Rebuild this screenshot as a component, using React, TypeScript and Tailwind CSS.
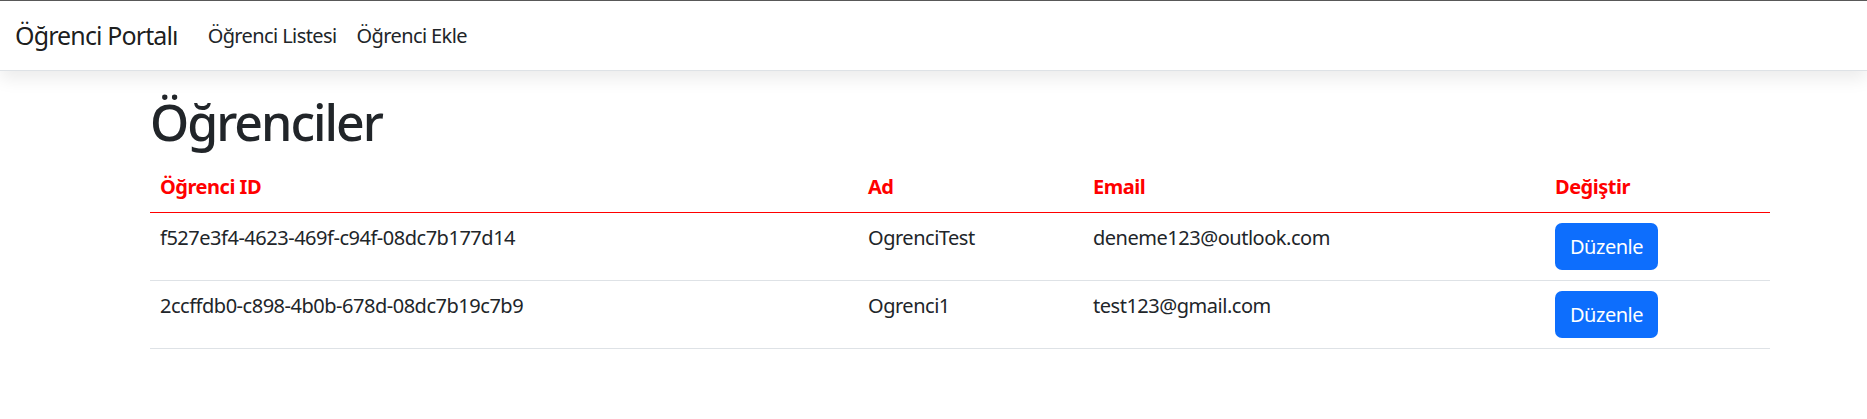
import React from "react";

type Student = { id: string; ad: string; email: string };

const students: Student[] = [
  { id: "f527e3f4-4623-469f-c94f-08dc7b177d14", ad: "OgrenciTest", email: "deneme123@outlook.com" },
  { id: "2ccffdb0-c898-4b0b-678d-08dc7b19c7b9", ad: "Ogrenci1", email: "test123@gmail.com" },
];

const font = "font-['Noto_Sans','Open_Sans',sans-serif] tracking-[-0.03em]";

const App = () => {
  return (
    <div className={`min-h-screen bg-white text-[#212529] ${font}`}>
      <div className="h-px bg-[#5a5a5a]" />
      {/* Navbar */}
      <nav className="relative z-10 h-[70px] border-b border-[#dee2e6] bg-white px-[15px] flex items-center shadow-[0_8px_16px_rgba(0,0,0,0.08)]">
        <span className="text-[25px] leading-[37px] tracking-[-0.035em] text-black/90 mr-[20px]">Öğrenci Portalı</span>
        <a className="px-[10px] text-[20px] leading-[30px] tracking-[-0.03em] text-[#212529]">Öğrenci Listesi</a>
        <a className="px-[10px] text-[20px] leading-[30px] tracking-[-0.03em] text-[#212529]">Öğrenci Ekle</a>
      </nav>

      {/* Content */}
      <main className="pl-[150px] pt-[21px]">
        <h1 className="text-[50px] leading-[60px] font-medium tracking-[-0.04em] mb-[10px]">Öğrenciler</h1>
        <table className="w-[1620px] table-fixed border-collapse text-[20px] leading-[30px]">
          <colgroup>
            <col className="w-[708px]" />
            <col className="w-[225px]" />
            <col className="w-[462px]" />
            <col className="w-[225px]" />
          </colgroup>
          <thead>
            <tr className="border-b border-[#ff0000] text-left text-[#ff0000]">
              <th className="p-[10px] font-bold">Öğrenci ID</th>
              <th className="p-[10px] font-bold">Ad</th>
              <th className="p-[10px] font-bold">Email</th>
              <th className="p-[10px] font-bold">Değiştir</th>
            </tr>
          </thead>
          <tbody>
            {students.map((s) => (
              <tr key={s.id} className="border-b border-[#dee2e6] align-top">
                <td className="p-[10px] whitespace-nowrap">{s.id}</td>
                <td className="p-[10px]">{s.ad}</td>
                <td className="p-[10px]">{s.email}</td>
                <td className="p-[10px]">
                  <button className="h-[47px] px-[15px] rounded-[7px] bg-[#0d6efd] text-white text-[20px] leading-[30px]">
                    Düzenle
                  </button>
                </td>
              </tr>
            ))}
          </tbody>
        </table>
      </main>
    </div>
  );
};

export default App;
